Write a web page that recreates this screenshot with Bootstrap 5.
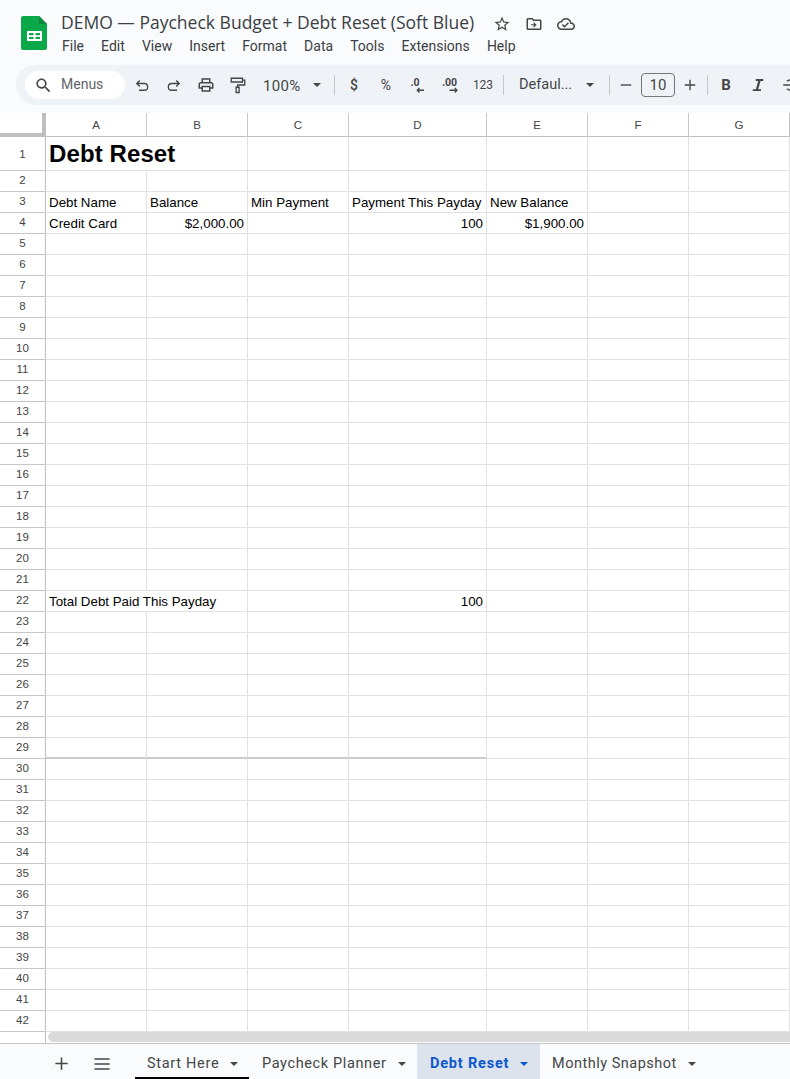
<!DOCTYPE html>
<html lang="en">
<head>
<meta charset="utf-8">
<title>DEMO — Paycheck Budget + Debt Reset (Soft Blue)</title>
<link href="https://cdn.jsdelivr.net/npm/bootstrap@5.3.0/dist/css/bootstrap.min.css" rel="stylesheet">
<style>
html,body{margin:0;height:1079px;overflow:hidden;background:#fff}
.app-frame{width:790px;height:1079px;overflow:hidden;font-family:Roboto,"Liberation Sans",sans-serif;color:#444746}
.top-band{height:113px;background:#f9fbfd}
.title-row{height:65px;padding-left:21px}
.doc-logo{width:26px;height:34px;margin-top:16px;flex:none}
.title-block{margin-left:14px;padding-top:12px}
.doc-title{font-family:"Open Sans",sans-serif;font-size:17.52px;line-height:21px;padding-bottom:3px;color:#3c4043;white-space:nowrap}
.title-icon{width:18px;height:18px;fill:#444746;flex:none;margin-left:14px}
.title-first{margin-left:19px}
.menu-line{font-size:14px;line-height:20px;margin-left:1px;color:#3c4043}
.menu-item{margin-right:17.1px}
.tool-pill{height:40px;margin-left:16px;background:#eff3f8;border-radius:20px 0 0 20px;width:790px;padding-left:9px}
.search-pill{width:100px;height:28px;background:#fff;border-radius:14px;padding:0 0 2px 9px;font-size:14px;color:#5f6368;flex:none;margin-right:1px}
.search-pill svg{width:19px;height:19px;fill:#444746;margin-right:8px;margin-top:2px}
.tool-btn{width:32px;height:32px;flex:none;font-size:12px;color:#444746}
.tool-btn svg{width:18px;height:18px}
.line-ico{fill:none;stroke:#444746;stroke-width:1.8}
.fill-ico{fill:#444746}
.tool-sep{width:1px;height:20px;background:#c7c7c7;flex:none}
.caret-mark{width:0;height:0;border-left:4px solid transparent;border-right:4px solid transparent;border-top:4px solid #444746;flex:none}
.tool-label{font-size:14.5px;color:#444746;flex:none}
.zoom-label{font-size:15px;letter-spacing:.3px;margin-left:9px;width:40px;padding-top:2px}
.zoom-caret{margin-left:10px}
.zoom-sep{margin-left:13px}
.money-btn{font-size:14px;margin-left:3px;font-weight:500}
.pct-btn{font-size:14px}
.decimal-more{margin-left:1px}
.font-label{margin-left:15px;width:54px;white-space:nowrap}
.font-caret{margin-left:13px}
.font-sep{margin-left:15px}
.size-sep{margin-left:1px}
.size-box{width:34px;height:24px;border:1px solid #747775;border-radius:4px;font-size:15px;flex:none;margin:0 -1px}
.bold-btn{margin-left:2px;font-weight:700;font-size:15px}
.sheet-grid{width:790px;table-layout:fixed;border-collapse:separate;border-spacing:0;font-family:"Liberation Sans",Arial,sans-serif;font-size:13.33px;color:#000}
.sheet-grid td,.sheet-grid th{height:21px;padding:2px 3px 0;border-right:1px solid #e1e1e1;border-bottom:1px solid #e1e1e1;overflow:hidden;white-space:nowrap;font-weight:400;line-height:18px}
.sheet-grid thead th{height:24px;text-align:center;font-size:11.5px;color:#444;border-right-color:#c7c7c7;border-bottom-color:#c0c0c0;padding:0}
.sheet-grid thead th.grid-corner{border-right:4px solid #bfbfbf;border-bottom:4px solid #bfbfbf;background:#fff}
.sheet-grid tbody th{text-align:center;font-size:11.5px;color:#444;padding:0 0 2px;border-right-color:#c0c0c0;border-bottom-color:#c7c7c7}
.sheet-grid td.num-cell{text-align:right}
.sheet-grid .tall-row th,.sheet-grid .tall-row td{height:34px}
.sheet-grid .tall-row th{padding-bottom:0}
.sheet-grid .sheet-heading{font-size:24px;font-weight:700;letter-spacing:.1px;line-height:32px;padding-top:0}
.sheet-grid .freeze-row td.freeze-cell{border-bottom:2px solid #cbcbcb}
.scroll-band{height:11px;background:#fff}
.scroll-corner{width:46px;border-right:1px solid #c0c0c0;flex:none}
.scroll-thumb{flex:1;margin:0 0 1px 2px;background:#dadada;border-radius:5px 0 0 5px}
.tab-band{height:36px;background:#f9fbfd;border-top:1px solid #c7c7c7;font-size:14.5px;letter-spacing:.5px;color:#444746}
.tab-add{width:21px;margin:4px 0 0 51px;flex:none}
.tab-list{width:20px;margin:4px 23px 0 20px;flex:none}
.sheet-tab{height:35px;padding:4px 0 0 12px;flex:none;white-space:nowrap}
.sheet-tab .caret-mark{margin-left:11px}
.tab-open{box-shadow:inset 0 -2px 0 #000;width:114px;letter-spacing:.7px}
.tab-second{width:168px;padding-left:13px;letter-spacing:.62px}
.tab-active{background:#dde3ec;color:#0b57d0;font-weight:700;width:123px;padding-left:13px;letter-spacing:.8px}
.tab-active .caret-mark{border-top-color:#0b57d0}
</style>
</head>
<body>
<div class="app-frame d-flex flex-column">
  <div class="top-band flex-none">
    <div class="title-row d-flex">
      <svg class="doc-logo" viewBox="0 0 26 34"><path d="M2 0h16l8 8v24a2 2 0 0 1-2 2H2a2 2 0 0 1-2-2V2a2 2 0 0 1 2-2z" fill="#0ba84a"/><path d="M18 0l8 8h-8z" fill="#098a3c"/><path d="M6 15h15v10H6zM8 17v2.200h4.500V17zm6.500 0v2.200H19V17zM8 21v2h4.500v-2zm6.500 0v2H19v-2z" fill="#fff" fill-rule="evenodd"/></svg>
      <div class="title-block">
        <div class="d-flex align-items-center">
          <span class="doc-title">DEMO — Paycheck Budget + Debt Reset (Soft Blue)</span>
          <svg class="title-icon title-first" viewBox="0 0 24 24"><path d="M22 9.240l-7.190-.62L12 2 9.190 8.630 2 9.240l5.460 4.730L5.820 21 12 17.270 18.180 21l-1.630-7.030L22 9.240zM12 15.400l-3.760 2.270 1-4.280-3.320-2.880 4.380-.38L12 6.100l1.710 4.040 4.380.38-3.320 2.880 1 4.280L12 15.400z"/></svg>
          <svg class="title-icon" viewBox="0 0 24 24"><path d="M20 6h-8l-2-2H4c-1.100 0-2 .9-2 2v12c0 1.100.9 2 2 2h16c1.100 0 2-.9 2-2V8c0-1.100-.9-2-2-2zm0 12H4V6h5.170l2 2H20v10z"/><path d="M12 9.500l3.500 3.500-3.500 3.500-1.100-1.100 1.600-1.600H8v-1.600h4.500l-1.600-1.600z"/></svg>
          <svg class="title-icon" viewBox="0 0 24 24"><path d="M19.350 10.040C18.670 6.590 15.640 4 12 4 9.110 4 6.600 5.640 5.350 8.040 2.340 8.360 0 10.910 0 14c0 3.310 2.690 6 6 6h13c2.760 0 5-2.240 5-5 0-2.640-2.050-4.780-4.650-4.960zM19 18H6c-2.210 0-4-1.790-4-4 0-2.050 1.530-3.760 3.560-3.970l1.070-.11.5-.95C8.080 7.140 9.940 6 12 6c2.620 0 4.880 1.860 5.390 4.430l.3 1.500 1.530.11c1.560.1 2.780 1.410 2.780 2.960 0 1.650-1.350 3-3 3zm-9-3.820l-2.090-2.090L6.500 13.500 10 17l6.010-6.010-1.410-1.410z"/></svg>
        </div>
        <div class="menu-line d-flex">
          <span class="menu-item">File</span><span class="menu-item">Edit</span><span class="menu-item">View</span><span class="menu-item">Insert</span><span class="menu-item">Format</span><span class="menu-item">Data</span><span class="menu-item">Tools</span><span class="menu-item">Extensions</span><span class="menu-item">Help</span>
        </div>
      </div>
    </div>
    <div class="tool-pill d-flex align-items-center">
      <div class="search-pill d-flex align-items-center">
        <svg viewBox="0 0 24 24"><path d="M15.500 14h-.79l-.28-.27C15.410 12.590 16 11.110 16 9.500 16 5.910 13.090 3 9.500 3S3 5.910 3 9.500 5.910 16 9.500 16c1.610 0 3.090-.59 4.230-1.570l.27.28v.79l5 4.990L20.490 19l-4.990-5zm-6 0C7.010 14 5 11.990 5 9.500S7.010 5 9.500 5 14 7.010 14 9.500 11.990 14 9.500 14z"/></svg>
        <span>Menus</span>
      </div>
      <div class="tool-btn d-flex align-items-center justify-content-center"><svg class="line-ico" viewBox="0 0 24 24"><path d="M9 6L5 10l4 4M5 10h10a4.500 4.500 0 0 1 0 9H8"/></svg></div>
      <div class="tool-btn d-flex align-items-center justify-content-center"><svg class="line-ico" viewBox="0 0 24 24"><path d="M15 6l4 4-4 4M19 10H9a4.500 4.500 0 0 0 0 9h7"/></svg></div>
      <div class="tool-btn d-flex align-items-center justify-content-center"><svg class="fill-ico" viewBox="0 0 24 24"><path d="M19 8h-1V3H6v5H5c-1.660 0-3 1.340-3 3v6h4v4h12v-4h4v-6c0-1.660-1.340-3-3-3zM8 5h8v3H8V5zm8 14H8v-4h8v4zm2-4v-2H6v2H4v-4c0-.55.45-1 1-1h14c.55 0 1 .45 1 1v4h-2z"/></svg></div>
      <div class="tool-btn d-flex align-items-center justify-content-center"><svg class="line-ico" viewBox="0 0 24 24"><path d="M3 3h15v5H3zM18 5.500h3v6.500h-9.500v3M9.500 15h4v7h-4z"/></svg></div>
      <span class="tool-label zoom-label">100%</span>
      <span class="caret-mark zoom-caret"></span>
      <span class="tool-sep zoom-sep"></span>
      <div class="tool-btn money-btn d-flex align-items-center justify-content-center">$</div>
      <div class="tool-btn pct-btn d-flex align-items-center justify-content-center">%</div>
      <div class="tool-btn d-flex align-items-center justify-content-center"><svg viewBox="0 0 24 24"><text x="2" y="13" font-size="14" font-weight="700" fill="#444746" font-family="Roboto">.0</text><path d="M20 19H11M14 16l-3 3 3 3" class="line-ico"/></svg></div>
      <div class="tool-btn decimal-more d-flex align-items-center justify-content-center"><svg viewBox="0 0 24 24"><text x="0" y="13" font-size="14" font-weight="700" fill="#444746" font-family="Roboto">.00</text><path d="M10 19h10M17 16l3 3-3 3" class="line-ico"/></svg></div>
      <div class="tool-btn d-flex align-items-center justify-content-center">123</div>
      <span class="tool-sep ms-1"></span>
      <span class="tool-label font-label">Defaul...</span>
      <span class="caret-mark font-caret"></span>
      <span class="tool-sep font-sep"></span>
      <div class="tool-btn d-flex align-items-center justify-content-center"><svg class="line-ico" viewBox="0 0 24 24"><path d="M5 12h14"/></svg></div>
      <div class="size-box d-flex align-items-center justify-content-center">10</div>
      <div class="tool-btn d-flex align-items-center justify-content-center"><svg class="line-ico" viewBox="0 0 24 24"><path d="M5 12h14M12 5v14"/></svg></div>
      <span class="tool-sep size-sep"></span>
      <div class="tool-btn bold-btn d-flex align-items-center justify-content-center">B</div>
      <div class="tool-btn d-flex align-items-center justify-content-center"><svg class="fill-ico" viewBox="0 0 24 24"><path d="M9 4h10v2.500h-3.600L12.300 17.500H16V20H5v-2.500h4.200L12.300 6.500H9z"/></svg></div>
      <div class="tool-btn d-flex align-items-center justify-content-center"><svg class="line-ico" viewBox="0 0 24 24"><path d="M3 12h18M17 7a5 3 0 0 0-9 0M8 17a5 3 0 0 0 9 0"/></svg></div>
    </div>
  </div>

  <table class="sheet-grid">
    <colgroup><col style="width:46px"><col style="width:101px"><col style="width:101px"><col style="width:101px"><col style="width:138px"><col style="width:101px"><col style="width:101px"><col style="width:101px"></colgroup>
    <thead><tr><th class="grid-corner"></th><th>A</th><th>B</th><th>C</th><th>D</th><th>E</th><th>F</th><th>G</th></tr></thead>
    <tbody>
      <tr class="tall-row"><th>1</th><td colspan="2" class="sheet-heading">Debt Reset</td><td></td><td></td><td></td><td></td><td></td></tr>
      <tr><th>2</th><td></td><td></td><td></td><td></td><td></td><td></td><td></td></tr>
      <tr><th>3</th><td>Debt Name</td><td>Balance</td><td>Min Payment</td><td>Payment This Payday</td><td>New Balance</td><td></td><td></td></tr>
      <tr><th>4</th><td>Credit Card</td><td class="num-cell">$2,000.00</td><td></td><td class="num-cell">100</td><td class="num-cell">$1,900.00</td><td></td><td></td></tr>
      <tr><th>5</th><td></td><td></td><td></td><td></td><td></td><td></td><td></td></tr>
      <tr><th>6</th><td></td><td></td><td></td><td></td><td></td><td></td><td></td></tr>
      <tr><th>7</th><td></td><td></td><td></td><td></td><td></td><td></td><td></td></tr>
      <tr><th>8</th><td></td><td></td><td></td><td></td><td></td><td></td><td></td></tr>
      <tr><th>9</th><td></td><td></td><td></td><td></td><td></td><td></td><td></td></tr>
      <tr><th>10</th><td></td><td></td><td></td><td></td><td></td><td></td><td></td></tr>
      <tr><th>11</th><td></td><td></td><td></td><td></td><td></td><td></td><td></td></tr>
      <tr><th>12</th><td></td><td></td><td></td><td></td><td></td><td></td><td></td></tr>
      <tr><th>13</th><td></td><td></td><td></td><td></td><td></td><td></td><td></td></tr>
      <tr><th>14</th><td></td><td></td><td></td><td></td><td></td><td></td><td></td></tr>
      <tr><th>15</th><td></td><td></td><td></td><td></td><td></td><td></td><td></td></tr>
      <tr><th>16</th><td></td><td></td><td></td><td></td><td></td><td></td><td></td></tr>
      <tr><th>17</th><td></td><td></td><td></td><td></td><td></td><td></td><td></td></tr>
      <tr><th>18</th><td></td><td></td><td></td><td></td><td></td><td></td><td></td></tr>
      <tr><th>19</th><td></td><td></td><td></td><td></td><td></td><td></td><td></td></tr>
      <tr><th>20</th><td></td><td></td><td></td><td></td><td></td><td></td><td></td></tr>
      <tr><th>21</th><td></td><td></td><td></td><td></td><td></td><td></td><td></td></tr>
      <tr><th>22</th><td colspan="2">Total Debt Paid This Payday</td><td></td><td class="num-cell">100</td><td></td><td></td><td></td></tr>
      <tr><th>23</th><td></td><td></td><td></td><td></td><td></td><td></td><td></td></tr>
      <tr><th>24</th><td></td><td></td><td></td><td></td><td></td><td></td><td></td></tr>
      <tr><th>25</th><td></td><td></td><td></td><td></td><td></td><td></td><td></td></tr>
      <tr><th>26</th><td></td><td></td><td></td><td></td><td></td><td></td><td></td></tr>
      <tr><th>27</th><td></td><td></td><td></td><td></td><td></td><td></td><td></td></tr>
      <tr><th>28</th><td></td><td></td><td></td><td></td><td></td><td></td><td></td></tr>
      <tr class="freeze-row"><th>29</th><td class="freeze-cell"></td><td class="freeze-cell"></td><td class="freeze-cell"></td><td class="freeze-cell"></td><td></td><td></td><td></td></tr>
      <tr><th>30</th><td></td><td></td><td></td><td></td><td></td><td></td><td></td></tr>
      <tr><th>31</th><td></td><td></td><td></td><td></td><td></td><td></td><td></td></tr>
      <tr><th>32</th><td></td><td></td><td></td><td></td><td></td><td></td><td></td></tr>
      <tr><th>33</th><td></td><td></td><td></td><td></td><td></td><td></td><td></td></tr>
      <tr><th>34</th><td></td><td></td><td></td><td></td><td></td><td></td><td></td></tr>
      <tr><th>35</th><td></td><td></td><td></td><td></td><td></td><td></td><td></td></tr>
      <tr><th>36</th><td></td><td></td><td></td><td></td><td></td><td></td><td></td></tr>
      <tr><th>37</th><td></td><td></td><td></td><td></td><td></td><td></td><td></td></tr>
      <tr><th>38</th><td></td><td></td><td></td><td></td><td></td><td></td><td></td></tr>
      <tr><th>39</th><td></td><td></td><td></td><td></td><td></td><td></td><td></td></tr>
      <tr><th>40</th><td></td><td></td><td></td><td></td><td></td><td></td><td></td></tr>
      <tr><th>41</th><td></td><td></td><td></td><td></td><td></td><td></td><td></td></tr>
      <tr><th>42</th><td></td><td></td><td></td><td></td><td></td><td></td><td></td></tr>
    </tbody>
  </table>

  <div class="scroll-band d-flex"><span class="scroll-corner"></span><span class="scroll-thumb"></span></div>

  <div class="tab-band d-flex align-items-center">
    <svg class="tab-add" viewBox="0 0 24 24" height="21"><path d="M5 12h14M12 5v14" class="line-ico"/></svg>
    <svg class="tab-list" viewBox="0 0 24 24" height="20"><path d="M3 6h18M3 12h18M3 18h18" class="line-ico"/></svg>
    <div class="sheet-tab tab-open d-flex align-items-center">Start Here<span class="caret-mark"></span></div>
    <div class="sheet-tab tab-second d-flex align-items-center">Paycheck Planner<span class="caret-mark"></span></div>
    <div class="sheet-tab tab-active d-flex align-items-center">Debt Reset<span class="caret-mark"></span></div>
    <div class="sheet-tab d-flex align-items-center">Monthly Snapshot<span class="caret-mark"></span></div>
  </div>
</div>
<script src="https://cdn.jsdelivr.net/npm/bootstrap@5.3.0/dist/js/bootstrap.bundle.min.js"></script>
</body>
</html>
